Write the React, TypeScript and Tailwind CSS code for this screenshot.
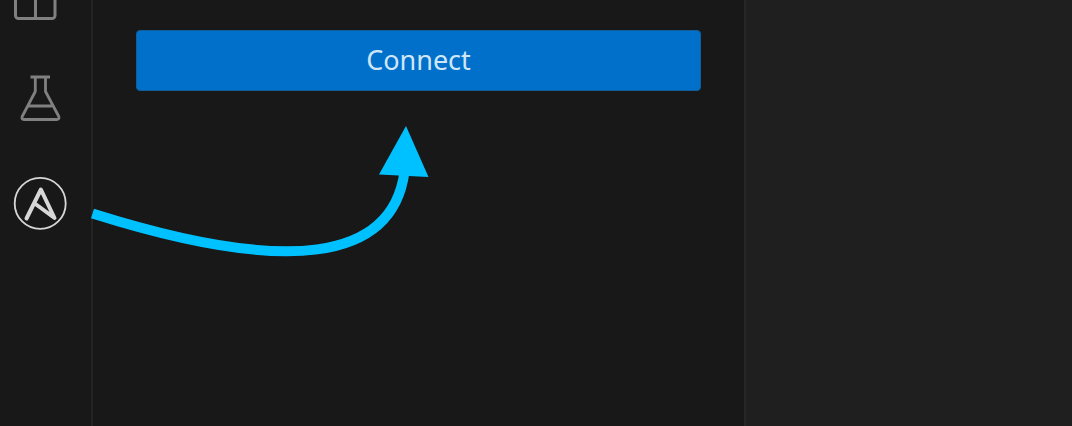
import type { ReactNode } from "react";

function RailButton({ label, children }: { label: string; children: ReactNode }) {
  return (
    <button type="button" aria-label={label} className="flex h-[106px] w-20 shrink-0 items-center justify-center">
      {children}
    </button>
  );
}

function WindowIcon() {
  return (
    <svg className="overflow-visible" width="56" height="56" viewBox="0 0 56 56" fill="none" stroke="#808080" strokeWidth="3">
      <rect x="3.500" y="14" width="39.500" height="41.500" rx="3" />
      <path d="M3.500 24H43M23.500 24V55" />
    </svg>
  );
}

function BeakerIcon() {
  return (
    <svg width="56" height="56" viewBox="0 0 56 56" fill="none" stroke="#808080" strokeWidth="2.800" strokeLinejoin="round">
      <path d="M18.500 8H38M23.300 8V22.500L10.200 47.500Q9.200 50.500 12 50.500H44.500Q47.800 50.500 46.800 47.500L33.500 22.500V8M16.500 37H40" />
    </svg>
  );
}

function AnsibleIcon() {
  return (
    <svg width="56" height="56" viewBox="0 0 56 56" fill="none" stroke="#d7d7d7">
      <circle cx="28.200" cy="28.400" r="25.500" strokeWidth="1.800" />
      <path d="M14.500 43.500L28.900 14.500L42.500 43L22.800 28.500" strokeWidth="4" strokeLinecap="round" strokeLinejoin="round" />
    </svg>
  );
}

export default function App() {
  return (
    <div className="flex h-screen min-h-80 overflow-hidden bg-[#1f1f1f] font-['Noto_Sans',sans-serif]">
      <nav aria-label="Activity bar" className="w-[93px] shrink-0 border-r-2 border-[#242424] bg-[#181818]">
        <div className="-mt-[62px] flex flex-col">
          <RailButton label="Windows"><WindowIcon /></RailButton>
          <RailButton label="Testing"><BeakerIcon /></RailButton>
          <RailButton label="Ansible"><AnsibleIcon /></RailButton>
        </div>
      </nav>
      <div className="flex min-w-0 flex-1">
        <aside className="relative w-[66.7%] shrink-0 border-r-2 border-[#262626] bg-[#181818] px-[43px] pt-[30px]">
          <button type="button" className="h-[61px] w-full rounded border border-[#125d9b] bg-[#0070ca] text-[27px] font-normal text-[#cfe6f8]">
            Connect
          </button>
          <svg className="pointer-events-none absolute -left-1 top-[120px]" width="350" height="145" viewBox="89 120 350 145" fill="none" aria-hidden="true">
            <path d="M92.500 213.500Q386 306 404.500 172" stroke="#00c1ff" strokeWidth="10" />
            <path d="M406 126L428.500 177L379 174.500Z" fill="#00c1ff" />
          </svg>
        </aside>
        <main className="min-w-0 flex-1 bg-[#1f1f1f]" />
      </div>
    </div>
  );
}
